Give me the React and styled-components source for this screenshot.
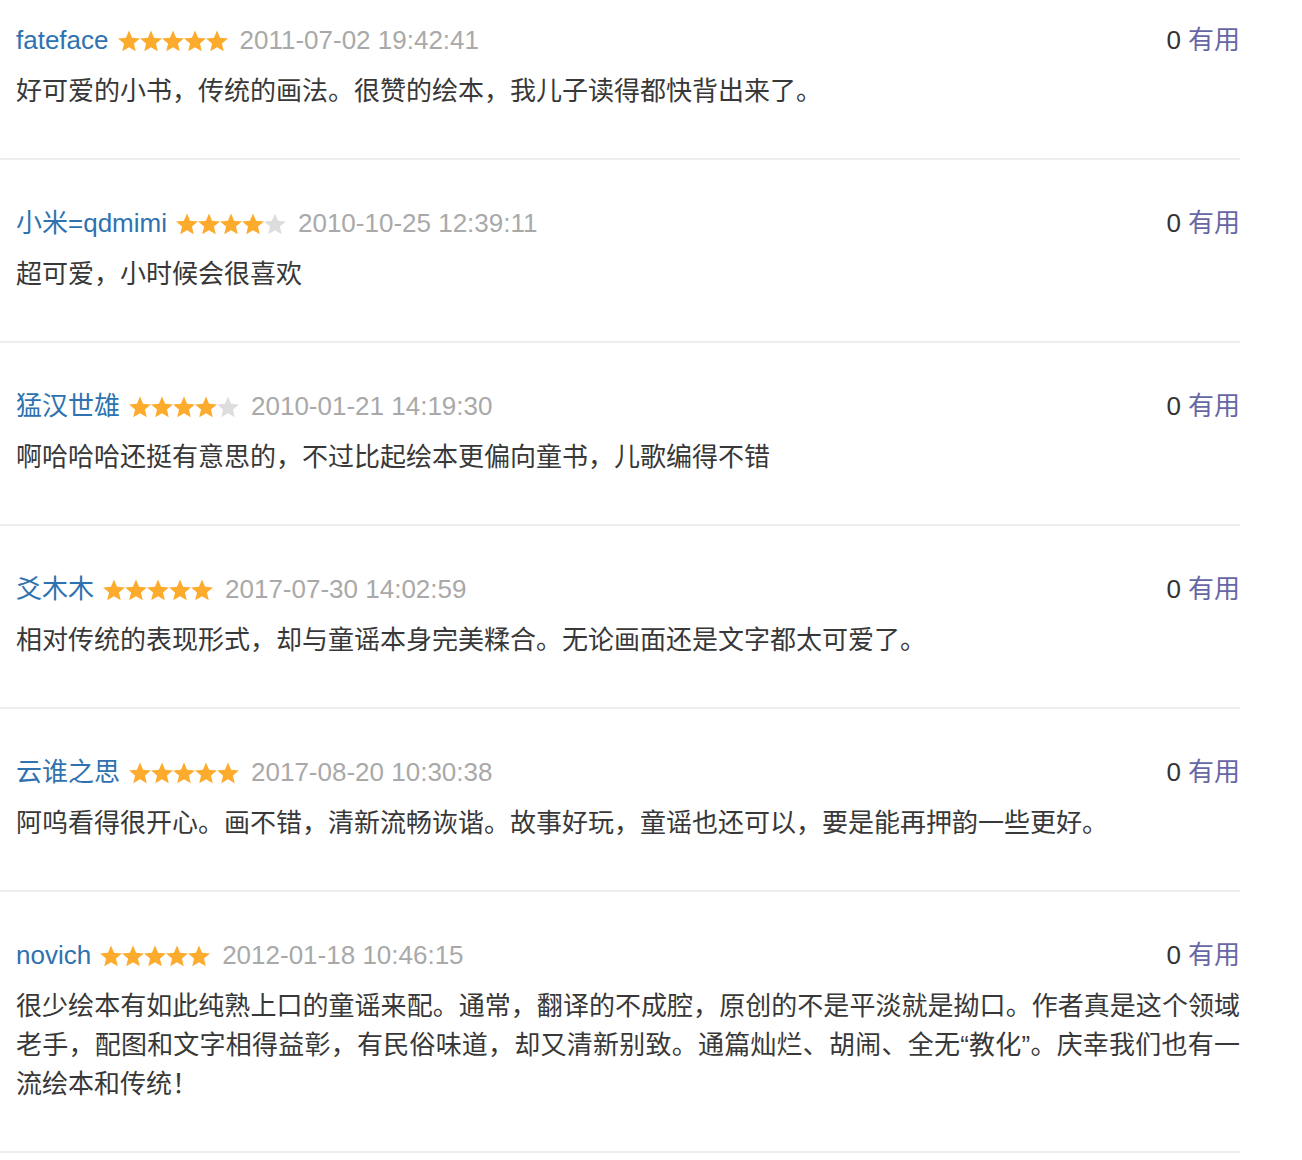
import React from "react";
import styled, { createGlobalStyle } from "styled-components";

const GlobalStyle = createGlobalStyle`
  body {
    margin: 0;
    background: #fff;
    font-family: "Liberation Sans", Arial, "Noto Sans CJK SC", sans-serif;
  }
`;

const List = styled.div`
  width: 1240px;
`;

const Item = styled.div`
  padding: 44px 0 47px 16px;
  border-bottom: 2px solid #eeeeee;
  &:first-child {
    padding-top: 21px;
  }
`;

const Head = styled.div`
  display: flex;
  align-items: baseline;
  height: 39px;
  line-height: 39px;
  font-size: 26px;
`;

const Name = styled.span`
  color: #2f72b0;
  margin-right: 9px;
`;

const Stars = styled.span`
  display: inline-flex;
  align-self: center;
  margin-right: 12px;
`;

const Date = styled.span`
  color: #a9a9a9;
`;

const Vote = styled.span`
  margin-left: auto;
  color: #333;
`;

const Useful = styled.span`
  color: #6767a6;
  margin-left: 7px;
`;

const Body = styled.div`
  margin-top: 12px;
  font-size: 26px;
  line-height: 39px;
  color: #383838;
  text-align: justify;
`;

const Star = ({ on }) => (
  <svg width="22" height="22" viewBox="0 0 22 22">
    <polygon
      points="11,0.5 14.06,7.79 21.94,8.45 15.95,13.61 17.76,21.3 11,17.2 4.24,21.3 6.05,13.61 0.06,8.45 7.94,7.79"
      fill={on ? "#fcab2c" : "#dddddd"}
    />
  </svg>
);

const reviews = [
  {
    name: "fateface",
    stars: 5,
    date: "2011-07-02 19:42:41",
    text: "好可爱的小书，传统的画法。很赞的绘本，我儿子读得都快背出来了。",
  },
  {
    name: "小米=qdmimi",
    stars: 4,
    date: "2010-10-25 12:39:11",
    text: "超可爱，小时候会很喜欢",
  },
  {
    name: "猛汉世雄",
    stars: 4,
    date: "2010-01-21 14:19:30",
    text: "啊哈哈哈还挺有意思的，不过比起绘本更偏向童书，儿歌编得不错",
  },
  {
    name: "爻木木",
    stars: 5,
    date: "2017-07-30 14:02:59",
    text: "相对传统的表现形式，却与童谣本身完美糅合。无论画面还是文字都太可爱了。",
  },
  {
    name: "云谁之思",
    stars: 5,
    date: "2017-08-20 10:30:38",
    text: "阿呜看得很开心。画不错，清新流畅诙谐。故事好玩，童谣也还可以，要是能再押韵一些更好。",
  },
  {
    name: "novich",
    stars: 5,
    date: "2012-01-18 10:46:15",
    text: "很少绘本有如此纯熟上口的童谣来配。通常，翻译的不成腔，原创的不是平淡就是拗口。作者真是这个领域老手，配图和文字相得益彰，有民俗味道，却又清新别致。通篇灿烂、胡闹、全无“教化”。庆幸我们也有一流绘本和传统！",
  },
];

const App = () => {
  return (
    <>
      <GlobalStyle />
      <List>
        {reviews.map((r) => (
          <Item key={r.date}>
            <Head>
              <Name>{r.name}</Name>
              <Stars>
                {[1, 2, 3, 4, 5].map((i) => (
                  <Star key={i} on={i <= r.stars} />
                ))}
              </Stars>
              <Date>{r.date}</Date>
              <Vote>
                0<Useful>有用</Useful>
              </Vote>
            </Head>
            <Body>{r.text}</Body>
          </Item>
        ))}
      </List>
    </>
  );
};

export default App;
